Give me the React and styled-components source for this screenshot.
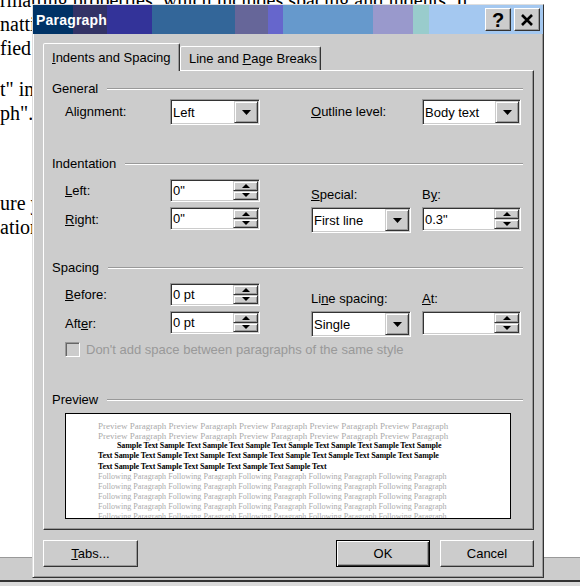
import React from 'react';
import styled, { createGlobalStyle, css } from 'styled-components';

const GlobalStyle = createGlobalStyle`
  html, body { margin: 0; padding: 0; background: #ffffff; }
  body { width: 580px; height: 586px; overflow: hidden; }
`;

const Screen = styled.div`
  position: relative;
  width: 580px;
  height: 586px;
  overflow: hidden;
  background: #ffffff;
  display: flex;
  flex-direction: column;
`;

const Document = styled.div`
  flex: 1;
  overflow: hidden;
  font-family: "Liberation Serif", "Times New Roman", serif;
  font-size: 20px;
  line-height: 24px;
  color: #000;
  white-space: nowrap;
`;

const DocLine = styled.div`
  margin-top: ${p => p.$gap}px;
`;

const StatusBar = styled.div`
  flex: none;
  height: 22px;
  background: #cccccc;
  border-top: 1px solid #999999;
  border-bottom: 2px solid #333333;
`;

const BottomStrip = styled.div`
  flex: none;
  height: 4px;
  background: #dadada;
`;

const Dialog = styled.div`
  position: absolute;
  left: 32px;
  top: 4px;
  width: 512px;
  height: 574px;
  box-sizing: border-box;
  background: #cccccc;
  border: 1px solid;
  border-color: #dedede #333333 #333333 #dedede;
  box-shadow: inset 1px 1px #ffffff, inset -1px -1px #999999;
  display: flex;
  flex-direction: column;
  font-family: "Liberation Sans", Arial, sans-serif;
  font-size: 13px;
  color: #000;
`;

const TitleBar = styled.div`
  flex: none;
  height: 29px;
  display: flex;
  align-items: center;
  padding: 0 3px;
  background: linear-gradient(
    to right,
    #003366 0 40px,
    #333366 40px 74px,
    #333399 74px 119px,
    #336699 119px 202px,
    #666699 202px 235px,
    #6666cc 235px 250px,
    #6699cc 250px 340px,
    #9999cc 340px 380px,
    #99cccc 380px 396px,
    #a4c8f0 396px
  );
`;

const TitleText = styled.span`
  color: #ffffff;
  font-weight: bold;
  font-size: 14px;
  letter-spacing: 0.2px;
`;

const CaptionButtons = styled.div`
  margin-left: auto;
  display: flex;
  gap: 3px;
`;

const CaptionButton = styled.div`
  box-sizing: border-box;
  width: 26px;
  height: 23px;
  background: #cccccc;
  border: 1px solid;
  border-color: #ffffff #333333 #333333 #ffffff;
  box-shadow: inset -1px -1px #999999;
  display: flex;
  align-items: center;
  justify-content: center;
  font-weight: bold;
  font-size: 20px;
  line-height: 1;
  color: #000;
`;

const Body = styled.div`
  flex: 1;
  display: flex;
  flex-direction: column;
  padding: 9px 9px 9px 10px;
`;

const TabStrip = styled.div`
  flex: none;
  height: 27px;
  display: flex;
  align-items: flex-end;
`;

const Tab = styled.div`
  box-sizing: border-box;
  width: ${p => p.$w}px;
  height: ${p => (p.$active ? 28 : 24)}px;
  margin-bottom: ${p => (p.$active ? -1 : 0)}px;
  position: relative;
  z-index: ${p => (p.$active ? 2 : 1)};
  background: #cccccc;
  border: 1px solid;
  border-bottom: none;
  border-color: #ffffff #333333 transparent #ffffff;
  box-shadow: inset -1px 0 #999999;
  border-radius: 2px 2px 0 0;
  padding-left: 8px;
  display: flex;
  align-items: center;
  white-space: nowrap;
`;

const Panel = styled.div`
  flex: none;
  box-sizing: border-box;
  height: 460px;
  background: #cccccc;
  border: 1px solid;
  border-color: #ffffff #333333 #333333 #ffffff;
  box-shadow: inset -1px -1px #999999;
  padding: 0 10px 0 8px;
  display: flex;
  flex-direction: column;
`;

const GroupHeader = styled.div`
  display: flex;
  align-items: center;
  gap: 9px;
  height: 14px;
  line-height: 14px;
  margin-top: ${p => p.$mt}px;
  white-space: nowrap;
  &::after {
    content: '';
    flex: 1;
    height: 0;
    border-top: 1px solid #999999;
    border-bottom: 1px solid #ffffff;
  }
`;

const FieldGrid = styled.div`
  display: grid;
  grid-template-columns: 105px 90px 51px 100px 11px 99px;
  row-gap: 5px;
  margin: ${p => p.$mt}px 0 0 13px;
  align-items: start;
`;

const Label = styled.div`
  grid-column: ${p => p.$col};
  align-self: ${p => p.$align || 'center'};
  line-height: 14px;
  white-space: nowrap;
`;

const Key = styled.span`
  text-decoration: underline;
  text-underline-offset: 1px;
`;

const FieldBox = styled.div`
  grid-column: ${p => p.$col};
  box-sizing: border-box;
  height: ${p => p.$h}px;
  background: #ffffff;
  border: 1px solid;
  border-color: #999999 #ffffff #ffffff #999999;
  box-shadow: inset 1px 1px #333333, inset -1px -1px #cccccc;
  padding: 1px;
  display: flex;
  align-items: stretch;
`;

const FieldValue = styled.div`
  flex: 1;
  display: flex;
  align-items: center;
  padding-left: 1px;
  white-space: nowrap;
  overflow: hidden;
`;

const DropButton = styled.div`
  flex: none;
  box-sizing: border-box;
  width: 24px;
  background: #cccccc;
  border: 1px solid;
  border-color: #cccccc #333333 #333333 #cccccc;
  box-shadow: inset 1px 1px #ffffff, inset -1px -1px #999999;
  display: flex;
  align-items: center;
  justify-content: center;
`;

const SpinColumn = styled.div`
  flex: none;
  width: 25px;
  display: flex;
  flex-direction: column;
`;

const SpinButton = styled.div`
  flex: 1;
  box-sizing: border-box;
  background: #cccccc;
  border: 1px solid;
  border-color: #cccccc #333333 #333333 #cccccc;
  box-shadow: inset 1px 1px #ffffff, inset -1px -1px #999999;
  display: flex;
  align-items: center;
  justify-content: center;
`;

const CheckRow = styled.div`
  grid-column: 1 / -1;
  display: flex;
  align-items: center;
  gap: 6px;
  color: #999999;
  white-space: nowrap;
`;

const CheckBox = styled.div`
  box-sizing: border-box;
  width: 15px;
  height: 15px;
  background: #cccccc;
  border: 1px solid;
  border-color: #999999 #ffffff #ffffff #999999;
  box-shadow: inset 1px 1px #666666;
`;

const PreviewBox = styled.div`
  box-sizing: border-box;
  width: 446px;
  height: 106px;
  margin: 6px 0 0 13px;
  background: #ffffff;
  border: 1px solid #000000;
  padding: 7px 0 0 32px;
  overflow: hidden;
  font-family: "Liberation Serif", "Times New Roman", serif;
`;

const toneStyles = {
  prev: css`
    font-size: 9px;
    color: #aaaaaa;
  `,
  sample: css`
    font-size: 8px;
    font-weight: bold;
    color: #000000;
    letter-spacing: -0.1px;
  `,
  follow: css`
    font-size: 8.1px;
    color: #aaaaaa;
  `,
};

const PreviewLine = styled.div`
  height: 10.15px;
  line-height: 10.15px;
  white-space: nowrap;
  padding-left: ${p => p.$indent || 0}px;
  ${p => toneStyles[p.$tone]}
`;

const ButtonRow = styled.div`
  flex: none;
  display: flex;
  margin-top: 10px;
  gap: 10px;
`;

const PushButton = styled.div`
  box-sizing: border-box;
  width: ${p => p.$w}px;
  height: 27px;
  background: #cccccc;
  border: 1px solid;
  border-color: #ffffff #333333 #333333 #ffffff;
  box-shadow: inset -1px -1px #999999;
  display: flex;
  align-items: center;
  justify-content: center;
  margin-left: ${p => (p.$push ? 'auto' : '0')};
  ${p =>
    p.$default &&
    css`
      border-color: #000000;
      box-shadow: inset 1px 1px #ffffff, inset -1px -1px #333333, inset -2px -2px #999999;
    `}
`;

const Triangle = ({ up, w = 9, h = 5 }) => (
  <svg width={w} height={h} viewBox={`0 0 ${w} ${h}`}>
    <path d={up ? `M0 ${h}H${w}L${w / 2} 0Z` : `M0 0H${w}L${w / 2} ${h}Z`} fill="#000" />
  </svg>
);

const Combo = ({ col, h, value }) => (
  <FieldBox $col={col} $h={h}>
    <FieldValue>{value}</FieldValue>
    <DropButton>
      <Triangle />
    </DropButton>
  </FieldBox>
);

const Spin = ({ col, h, value }) => (
  <FieldBox $col={col} $h={h}>
    <FieldValue>{value}</FieldValue>
    <SpinColumn>
      <SpinButton>
        <Triangle up w={8} h={4} />
      </SpinButton>
      <SpinButton>
        <Triangle w={8} h={4} />
      </SpinButton>
    </SpinColumn>
  </FieldBox>
);

const docLines = [
  { gap: -12, text: 'rmatting properties, which includes spacing and indents. It' },
  { gap: 0, text: 'natting' },
  { gap: 0, text: 'fied' },
  { gap: 17, text: 't" in' },
  { gap: 0, text: 'ph".' },
  { gap: 66, text: 'ure y' },
  { gap: 0, text: 'ation' },
];

const prevText = Array(5).fill('Preview Paragraph').join(' ');
const followText = Array(5).fill('Following Paragraph').join(' ');

const previewLines = [
  { tone: 'prev', text: prevText },
  { tone: 'prev', text: prevText },
  { tone: 'sample', indent: 19, text: Array(7).fill('Sample Text').join(' ') + ' Sample' },
  { tone: 'sample', text: Array(8).fill('Text Sample').join(' ') },
  { tone: 'sample', text: Array(5).fill('Text Sample').join(' ') + ' Text' },
  { tone: 'follow', text: followText },
  { tone: 'follow', text: followText },
  { tone: 'follow', text: followText },
  { tone: 'follow', text: followText },
  { tone: 'follow', text: followText },
];

export default function App() {
  return (
    <>
      <GlobalStyle />
      <Screen>
        <Document>
          {docLines.map((l, i) => (
            <DocLine key={i} $gap={l.gap}>
              {l.text}
            </DocLine>
          ))}
        </Document>
        <StatusBar />
        <BottomStrip />

        <Dialog>
          <TitleBar>
            <TitleText>Paragraph</TitleText>
            <CaptionButtons>
              <CaptionButton>?</CaptionButton>
              <CaptionButton>
                <svg width="12" height="12" viewBox="0 0 12 12">
                  <path d="M1 1L11 11M11 1L1 11" stroke="#000" strokeWidth="2.6" />
                </svg>
              </CaptionButton>
            </CaptionButtons>
          </TitleBar>

          <Body>
            <TabStrip>
              <Tab $active $w={137}>
                <span>
                  <Key>I</Key>ndents and Spacing
                </span>
              </Tab>
              <Tab $w={141}>
                <span>
                  Line and <Key>P</Key>age Breaks
                </span>
              </Tab>
            </TabStrip>

            <Panel>
              <GroupHeader $mt={11}>General</GroupHeader>
              <FieldGrid $mt={3}>
                <Label $col={1}>
                  Ali<Key>g</Key>nment:
                </Label>
                <Combo col={2} h={26} value="Left" />
                <Label $col={4}>
                  <Key>O</Key>utline level:
                </Label>
                <Combo col={6} h={26} value="Body text" />
              </FieldGrid>

              <GroupHeader $mt={32}>Indentation</GroupHeader>
              <FieldGrid $mt={8}>
                <Label $col={1}>
                  <Key>L</Key>eft:
                </Label>
                <Spin col={2} h={23} value={'0"'} />
                <Label $col={4} $align="end">
                  <Key>S</Key>pecial:
                </Label>
                <Label $col={6} $align="end">
                  B<Key>y</Key>:
                </Label>
                <Label $col={1}>
                  <Key>R</Key>ight:
                </Label>
                <Spin col={2} h={23} value={'0"'} />
                <Combo col={4} h={26} value="First line" />
                <Spin col={6} h={24} value={'0.3"'} />
              </FieldGrid>

              <GroupHeader $mt={28}>Spacing</GroupHeader>
              <FieldGrid $mt={8}>
                <Label $col={1}>
                  <Key>B</Key>efore:
                </Label>
                <Spin col={2} h={23} value="0 pt" />
                <Label $col={4} $align="end">
                  Li<Key>n</Key>e spacing:
                </Label>
                <Label $col={6} $align="end">
                  <Key>A</Key>t:
                </Label>
                <Label $col={1}>
                  Aft<Key>e</Key>r:
                </Label>
                <Spin col={2} h={23} value="0 pt" />
                <Combo col={4} h={26} value="Single" />
                <Spin col={6} h={24} value="" />
                <CheckRow>
                  <CheckBox />
                  <span>Don't add space between paragraphs of the same style</span>
                </CheckRow>
              </FieldGrid>

              <GroupHeader $mt={36}>Preview</GroupHeader>
              <PreviewBox>
                {previewLines.map((l, i) => (
                  <PreviewLine key={i} $tone={l.tone} $indent={l.indent}>
                    {l.text}
                  </PreviewLine>
                ))}
              </PreviewBox>
            </Panel>

            <ButtonRow>
              <PushButton $w={95}>
                <span>
                  <Key>T</Key>abs...
                </span>
              </PushButton>
              <PushButton $w={94} $push $default>
                OK
              </PushButton>
              <PushButton $w={94}>Cancel</PushButton>
            </ButtonRow>
          </Body>
        </Dialog>
      </Screen>
    </>
  );
}
